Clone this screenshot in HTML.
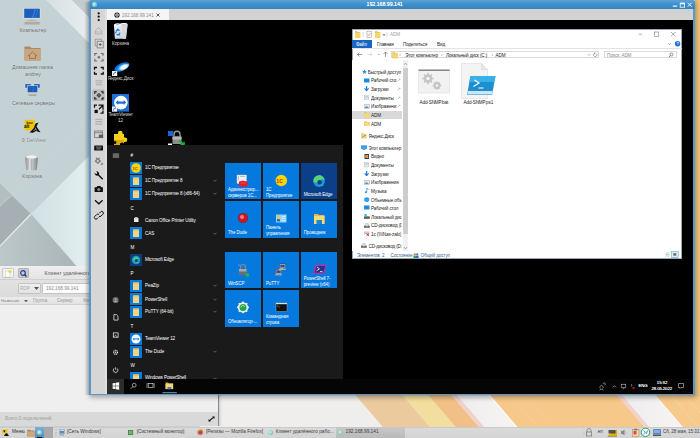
<!DOCTYPE html>
<html><head><meta charset="utf-8">
<style>
*{box-sizing:border-box;margin:0;padding:0}
html,body{width:700px;height:438px;overflow:hidden;position:relative;background:#c6d1d4;font-family:"Liberation Sans",sans-serif}
.a{position:absolute}
.t{position:absolute;white-space:nowrap;line-height:1}
</style></head><body>
<!-- wallpaper -->
<svg class="a" style="left:0;top:0" width="700" height="438" viewBox="0 0 700 438">
<defs>
<linearGradient id="wb" x1="0" y1="0" x2="1" y2="0"><stop offset="0" stop-color="#d6dfe2"/><stop offset="1" stop-color="#e9eff0"/></linearGradient>
<linearGradient id="wbt" x1="0" y1="0" x2="1" y2="0"><stop offset="0" stop-color="#bcc7ca"/><stop offset="1" stop-color="#a8b2b6"/></linearGradient>
<linearGradient id="wr" x1="0" y1="0" x2="1" y2="0"><stop offset="0" stop-color="#d0e0e3"/><stop offset="1" stop-color="#e4eff0"/></linearGradient>
</defs>
<rect width="700" height="438" fill="#c5d2d5"/>
<polygon points="46,0 72,0 92,20 92,46" fill="url(#wb)"/>
<polygon points="72,0 92,0 92,20" fill="#c2cbce"/>
<polygon points="31,214 92,153 92,284" fill="url(#wr)"/>
<polygon points="0,184 31,214 0,246" fill="#a6b0b4"/>
<polygon points="0,184 12,195 0,206" fill="#b4bec1"/>
<polygon points="0,246 31,214 92,284 0,284" fill="url(#wbt)"/>
<line x1="0" y1="246" x2="31" y2="214" stroke="#e8eeef" stroke-width="1.1"/>
<line x1="0" y1="206" x2="12" y2="195" stroke="#d5dde0" stroke-width="0.6"/>
<line x1="12" y1="195" x2="92" y2="114" stroke="#cdd7da" stroke-width="0.5"/>
<!-- bottom orange stripes -->
<defs><linearGradient id="ws" x1="0" x2="1"><stop offset="0" stop-color="#ededed"/><stop offset="1" stop-color="#f8f3f3"/></linearGradient></defs>
<rect x="200" y="390" width="500" height="40" fill="#efeeec"/>
<polygon points="353.7,393 400.9,393 430.1,427 382.9,427" fill="#ebcb9d"/>
<polygon points="400.9,393 426.6,393 455.8,427 430.1,427" fill="#f2de9f"/>
<polygon points="426.6,393 449.8,393 479.0,427 455.8,427" fill="#f1c086"/>
<polygon points="449.8,393 455.3,393 484.5,427 479.0,427" fill="#f0d2cc"/>
<polygon points="455.3,393 488.3,393 517.5,427 484.5,427" fill="url(#ws)"/>
<line x1="487.8" y1="393" x2="517.0" y2="427" stroke="#ffffff" stroke-width="1.2" opacity="1"/>
<polygon points="488.3,393 615.3,393 644.5,427 517.5,427" fill="#f6c889"/>
<line x1="508.3" y1="393" x2="537.5" y2="427" stroke="#f9d6a8" stroke-width="0.8" opacity="0.6"/>
<line x1="523.3" y1="393" x2="552.5" y2="427" stroke="#f9d6a8" stroke-width="0.8" opacity="0.5"/>
<polygon points="615.3,393 620.3,393 649.5,427 644.5,427" fill="#f3d2cc"/>
<polygon points="620.3,393 653.8,393 683.0,427 649.5,427" fill="url(#ws)"/>
<line x1="653.3" y1="393" x2="682.5" y2="427" stroke="#ffffff" stroke-width="1.0" opacity="1"/>
<polygon points="653.8,393 718.3,393 747.5,427 683.0,427" fill="#f7c98a"/>
<line x1="669.3" y1="393" x2="698.5" y2="427" stroke="#f9dab0" stroke-width="0.8" opacity="0.7"/>
<line x1="682.9" y1="393" x2="712.1" y2="427" stroke="#f9dab0" stroke-width="0.8" opacity="0.7"/>
<rect x="200" y="393" width="500" height="4" fill="url(#shd)"/>
<defs><linearGradient id="shd" x1="0" y1="0" x2="0" y2="1"><stop offset="0" stop-color="#000" stop-opacity=".12"/><stop offset="1" stop-color="#000" stop-opacity="0"/></linearGradient></defs>
<rect x="693" y="0" width="7" height="395" fill="#f2c87e"/>
</svg>

<!-- desktop icons -->
<style>
.dl{position:absolute;white-space:nowrap;line-height:1;font-size:5.2px;color:#5f6669;text-align:center;text-shadow:0 0 1px rgba(255,255,255,.9)}
</style>
<svg class="a" style="left:22px;top:7px" width="20" height="19" viewBox="0 0 20 19">
<rect x="1.4" y="0.9" width="17.2" height="10.8" fill="#e2ddd2"/>
<rect x="2.2" y="1.7" width="15.6" height="9.2" fill="#1a5fbe"/>
<path d="M10,10.9 L12.5,1.7 L14,1.7 L11.5,10.9z M13,10.9 L15.5,1.7 L16.2,1.7 L13.7,10.9z" fill="#3f86da" opacity="0.8"/>
<rect x="7.5" y="11.7" width="5" height="1.6" fill="#c9c9c5"/>
<rect x="5.5" y="13.1" width="9" height="0.9" fill="#b5b5b1"/>
<rect x="1.8" y="14.4" width="16.4" height="3.6" rx="0.5" fill="#c2c2bf"/>
<path d="M2.8,15.6 h14.4 M2.8,16.8 h14.4" stroke="#8f8f8b" stroke-width="0.5"/>
</svg>
<div class="dl" style="left:19px;top:27.7px;width:28px;font-size:5.2px">Компьютер</div>
<svg class="a" style="left:24px;top:45px" width="17" height="16" viewBox="0 0 17 16">
<path d="M0.5,1.5 h5.5 l1.5,1.5 h9 v12.5 h-16z" fill="#a88a66"/>
<rect x="0.5" y="4" width="16" height="11.5" rx="0.5" fill="#c9a67e"/>
<path d="M4,11 L8.5,7 L13,11 M5.5,10 v3.5 h6 v-3.5" stroke="#8f7050" stroke-width="0.8" fill="none"/>
</svg>
<div class="dl" style="left:12px;top:65.2px;width:41px">Домашняя папка</div>
<div class="dl" style="left:22px;top:72.2px;width:22px">andrey</div>
<svg class="a" style="left:24px;top:82px" width="17" height="16" viewBox="0 0 17 16">
<rect x="0.8" y="1.6" width="6.6" height="4.6" fill="#d8d4cc"/><rect x="1.3" y="2.1" width="5.6" height="3.6" fill="#1d5db5"/>
<rect x="9.6" y="1.6" width="6.6" height="4.6" fill="#d8d4cc"/><rect x="10.1" y="2.1" width="5.6" height="3.6" fill="#1d5db5"/>
<rect x="3" y="3.3" width="11" height="7.6" fill="#ddd9d0"/><rect x="3.6" y="3.9" width="9.8" height="6.4" fill="#1b60bd"/>
<path d="M8,10.3 l1.5,-6.4 h0.8 l-1.5,6.4z" fill="#3b82d6" opacity="0.6"/>
<rect x="7" y="10.9" width="3" height="1.5" fill="#d0d0cc"/>
<rect x="4.5" y="12.3" width="8" height="1.6" rx="0.5" fill="#a9a9a5"/>
</svg>
<div class="dl" style="left:12px;top:101.2px;width:42px">Сетевые серверы</div>
<svg class="a" style="left:23px;top:119px" width="19" height="15" viewBox="0 0 19 15">
<rect x="1.8" y="0.8" width="10.2" height="10.6" fill="#f4c400"/>
<text x="3.6" y="4.6" font-size="2.7" font-weight="bold" fill="#111" font-family="Liberation Sans">base</text>
<text x="1" y="9" font-size="4.6" font-weight="bold" fill="#111" font-family="Liberation Sans">alt</text>
<path d="M12.5,4.5 L15.5,3.5 L13.5,7.5 L17.5,13.5 L13,12 L10,13.8 L6.5,13.5 L10.5,9.5z" fill="#111"/>
<path d="M12,8.5 L13.5,11.5 M10.5,12 L12.5,10" stroke="#ddd" stroke-width="0.6"/>
</svg>
<div class="dl" style="left:21px;top:138.2px;width:25px;color:#7c8386">Ф DetView</div>
<svg class="a" style="left:24px;top:154px" width="15" height="17" viewBox="0 0 15 17">
<defs><linearGradient id="tg" x1="0" x2="1"><stop offset="0" stop-color="#8a8d8e"/><stop offset=".35" stop-color="#d8dadb"/><stop offset=".7" stop-color="#b1b4b5"/><stop offset="1" stop-color="#7d8081"/></linearGradient></defs>
<path d="M1,3 L14,3 L12.8,16 Q7.5,17.2 2.2,16z" fill="url(#tg)"/>
<ellipse cx="7.5" cy="3" rx="6.5" ry="1.8" fill="#c5c8c9"/>
<ellipse cx="7.5" cy="2.8" rx="5" ry="1.6" fill="#f1f2f2"/>
<path d="M4,4.5 v10 M7.5,5 v10.5 M11,4.5 v10" stroke="#9a9d9e" stroke-width="0.5"/>
</svg>
<div class="dl" style="left:21px;top:174.2px;width:22px">Корзина</div>

<!-- bottom-left window -->
<div class="a" style="left:0;top:266px;width:219px;height:160px;background:#efefef"></div>
<div class="a" style="left:0;top:266px;width:219px;height:13.5px;background:linear-gradient(#efefef,#e4e4e4);border-bottom:1px solid #cfcfcf"></div>
<div class="a" style="left:2.4px;top:268px;width:11.3px;height:10.4px;background:#f3f3f3;border:0.6px solid #c9c9c9;border-radius:1.2px"></div>
<svg class="a" style="left:4px;top:269px" width="9" height="9" viewBox="0 0 9 9"><rect x="1.5" y="2" width="4.5" height="6" fill="#fff" stroke="#bbb" stroke-width="0.4"/><circle cx="6" cy="2.5" r="1.6" fill="#f5d33a"/></svg>
<div class="a" style="left:18px;top:268px;width:10.7px;height:10.4px;background:#c8c8c8;border:0.6px solid #b3b3b3;border-radius:1.2px"></div>
<svg class="a" style="left:19px;top:269px" width="9" height="9" viewBox="0 0 9 9"><circle cx="4" cy="4" r="2.3" fill="none" stroke="#1f44a6" stroke-width="1.2"/><line x1="5.7" y1="5.7" x2="7.5" y2="7.5" stroke="#222" stroke-width="1.1"/></svg>
<div class="t" style="left:44.5px;top:270.7px;font-size:5.2px;color:#5a5a5a">Клиент удалённого доступа</div>
<div class="a" style="left:0;top:280px;width:219px;height:17px;background:linear-gradient(#e2e2e2,#dadada)"></div>
<div class="a" style="left:18px;top:283.4px;width:23px;height:11px;background:linear-gradient(#efefef,#e3e3e3);border:0.6px solid #c3c3c3;border-radius:1.2px"></div>
<div class="t" style="left:20px;top:286.5px;font-size:4.6px;color:#a8a8a8">RDP</div>
<svg class="a" style="left:34px;top:287px" width="5" height="3" viewBox="0 0 5 3"><polygon points="0,0 5,0 2.5,3" fill="#555"/></svg>
<div class="a" style="left:42.2px;top:283.4px;width:60px;height:11px;background:#fbfbfb;border:0.6px solid #c3c3c3;border-radius:1.2px"></div>
<div class="t" style="left:46px;top:286.5px;font-size:4.7px;color:#8a8a8a">192.168.99.141</div>
<div class="a" style="left:0;top:297px;width:219px;height:7.5px;background:linear-gradient(#ececec,#e2e2e2);border-bottom:0.5px solid #d2d2d2"></div>
<div class="t" style="left:1px;top:298.6px;font-size:4.3px;letter-spacing:-0.1px;color:#8a8a8a">Название</div>
<svg class="a" style="left:24px;top:299.8px" width="4" height="2.5" viewBox="0 0 4 2.5"><polygon points="0,0 4,0 2,2.5" fill="#666"/></svg>
<div class="t" style="left:33px;top:298.6px;font-size:4.5px;color:#9a9a9a">Группа</div>
<div class="t" style="left:57px;top:298.6px;font-size:4.5px;color:#9a9a9a">Сервер</div>
<div class="t" style="left:83px;top:298.6px;font-size:4.5px;color:#9a9a9a">Метка</div>
<div class="a" style="left:0;top:412px;width:219px;height:14px;background:#d9d9d9"></div>
<div class="t" style="left:5px;top:417.4px;font-size:4.7px;color:#9e9e9e">Всего 0 подключений.</div>
<svg class="a" style="left:208px;top:416px" width="7" height="6" viewBox="0 0 7 6"><path d="M1,5 L6,1" stroke="#222" stroke-width="1.3"/><path d="M0.5,5.5 l0,-2.4 l2.4,2.4z M6.5,0.5 l0,2.4 l-2.4,-2.4z" fill="#222"/></svg>
<div class="a" style="left:218.3px;top:394px;width:1px;height:32px;background:#8a8a8a"></div>
<div class="a" style="left:219.3px;top:394px;width:3px;height:32px;background:linear-gradient(90deg,rgba(0,0,0,.12),rgba(0,0,0,0))"></div>

<!-- remote window -->
<div class="a" style="left:84px;top:2px;width:5.2px;height:393px;background:linear-gradient(90deg,rgba(0,0,0,0),rgba(0,0,0,.2))"></div>
<div class="a" style="left:89.6px;top:0;width:605.4px;height:395px;box-shadow:0 1px 5px 1.5px rgba(0,0,0,.32)"></div>
<div class="a" style="left:89.2px;top:0;width:605.8px;height:395px;background:#5b97c9;border-radius:2.5px 2.5px 0 0"></div>
<div class="a" style="left:89.6px;top:0;width:605.4px;height:9px;background:linear-gradient(#5ba3d8,#3e8fcc 50%,#3584c0);border-radius:2.5px 2.5px 0 0"></div>
<div class="a" style="left:92px;top:1.8px;width:5.4px;height:5.4px;border-radius:50%;background:radial-gradient(circle at 40% 40%,#c9f0e6,#6cc6b8 70%,#8fd0e6)"></div>
<div class="t" style="left:366.6px;top:2.3px;font-size:5.2px;color:#fff;text-shadow:0 0 0.5px #fff">192.168.99.141</div>
<svg class="a" style="left:671px;top:1px" width="22" height="8" viewBox="0 0 22 8">
<rect x="1.8" y="4.6" width="4.4" height="1.1" fill="#fff"/>
<rect x="9.2" y="2" width="4.4" height="4.2" fill="none" stroke="#fff" stroke-width="0.8"/><rect x="9.2" y="2" width="4.4" height="1.3" fill="#fff"/>
<path d="M16.7,1.8 L20.6,5.8 M20.6,1.8 L16.7,5.8" stroke="#fff" stroke-width="0.9"/>
</svg>
<div class="a" style="left:91px;top:9px;width:602px;height:384.5px;background:#d6d6d6"></div>
<div class="a" style="left:105.4px;top:9px;width:1.4px;height:384.5px;background:#e0e0e0"></div>
<div class="a" style="left:107px;top:9px;width:586px;height:11px;background:#d2d2d2"></div>
<div class="a" style="left:107px;top:9.1px;width:62px;height:10.9px;background:#f5f5f5"></div>
<svg class="a" style="left:114px;top:11.5px" width="6" height="6" viewBox="0 0 6 6"><circle cx="3" cy="3" r="2.6" fill="#111"/><path d="M3,0.9 L5.1,3 L3,5.1 L0.9,3z" fill="#eee"/><circle cx="3" cy="3" r="0.8" fill="#111"/></svg>
<div class="t" style="left:121.8px;top:14.2px;font-size:4.6px;color:#8c8c8c">192.168.99.141</div>
<svg class="a" style="left:155.8px;top:12.8px" width="4" height="4" viewBox="0 0 4 4"><path d="M0.5,0.5 L3.5,3.5 M3.5,0.5 L0.5,3.5" stroke="#444" stroke-width="0.9"/></svg>
<div class="a" style="left:107px;top:20px;width:586px;height:373.5px;background:#000"></div>
<!-- toolbar icons -->
<svg class="a" style="left:91px;top:9px" width="16" height="220" viewBox="91 9 16 220">
<circle cx="98.7" cy="13.3" r="1.15" fill="#111"/><circle cx="98.7" cy="16.7" r="1.15" fill="#111"/><circle cx="98.7" cy="20.1" r="1.15" fill="#111"/>
<path d="M95.2,31 L98.6,27.6 L102,31 V34 H95.2z" fill="#d6d6d6" stroke="#aaaaaa" stroke-width="0.8"/><path d="M95.2,32 h6.8" stroke="#aaa" stroke-width="0.6"/>
<rect x="95.2" y="39.2" width="6.2" height="6.6" fill="none" stroke="#9a9a9a" stroke-width="0.9"/>
<rect x="97.2" y="41.3" width="6" height="6.6" fill="#dcdcdc" stroke="#858585" stroke-width="0.9"/>
<path d="M100.2,43 v3.2 M98.6,44.6 h3.2" stroke="#555" stroke-width="0.8"/>
<path d="M94.8,55.8 v-2.3 h2.3 M100.7,53.5 h2.3 v2.3 M103,58.7 v2.3 h-2.3 M97.1,61 h-2.3 v-2.3" fill="none" stroke="#6e6e6e" stroke-width="1.2"/>
<circle cx="98.9" cy="57.3" r="1.3" fill="#6e6e6e"/>
<path d="M94.5,69.8 v-2.3 h2.5 M100.7,67.5 h2.5 v2.3 M103.2,71.7 v2.3 h-2.5 M97,74 h-2.5 v-2.3" fill="none" stroke="#111" stroke-width="1.3"/>
<path d="M95.5,80.8 h6.6 M95.5,82.8 h6.6 M95.5,84.8 h6.6" stroke="#a8a8a8" stroke-width="0.9"/>
<rect x="92.6" y="89.9" width="11.7" height="10.6" rx="1" fill="#bfbfbf" stroke="#a6a6a6" stroke-width="0.6"/>
<path d="M94.8,93.7 v-2 h2 M101,91.7 h2 v2 M103,97 v2 h-2 M96.8,99 h-2 v-2" fill="none" stroke="#111" stroke-width="1.1"/>
<circle cx="98.9" cy="95.3" r="1.5" fill="none" stroke="#222" stroke-width="0.8"/><path d="M98.9,93 v4.6 M96.6,95.3 h4.6" stroke="#222" stroke-width="0.5"/>
<path d="M94.5,107.7 v-2.5 h2.5 M103,109.7 v-4.5 h-4.5 M99,109.2 L103,105.2" fill="none" stroke="#111" stroke-width="1.25"/>
<rect x="94.5" y="109.8" width="3.3" height="3.3" fill="#111"/><path d="M100.5,113 h2.5 v-2.5" fill="none" stroke="#111" stroke-width="1.25"/>
<path d="M95.3,119.3 h7 M95.3,121.7 h7 M95.3,124.1 h7" stroke="#a0a0a0" stroke-width="0.9"/>
<rect x="94.6" y="131" width="7.8" height="6.6" fill="none" stroke="#7e7e7e" stroke-width="0.9"/><path d="M94.6,132.7 h7.8" stroke="#7e7e7e" stroke-width="0.9"/><rect x="98.8" y="134.6" width="4.4" height="3.4" fill="#5e5e5e"/>
<rect x="94.2" y="145.4" width="8.8" height="5.2" rx="0.6" fill="#111"/><path d="M95.8,147.1 h5.6 M96.5,148.9 h4.2" stroke="#ddd" stroke-width="0.6"/>
<g fill="#858585"><circle cx="97.8" cy="161" r="2.3"/><path d="M97.1,158 h1.4 v6 h-1.4z M94.8,160.3 h6 v1.4 h-6z" /><path d="M95.5,158.2 l1,-1 l4.3,4.3 l-1,1z M99.1,157.2 l1,1 l-4.3,4.3 l-1,-1z"/></g><circle cx="97.8" cy="161" r="0.9" fill="#dcdcdc"/><circle cx="101.9" cy="164" r="1.3" fill="#8e8e8e"/><circle cx="101.9" cy="164" r="0.45" fill="#dcdcdc"/>
<path d="M94.6,172.6 a2.6,2.6 0 0 0 3.4,3.0 L102.2,179.8 L103.2,178.8 L99,174.6 a2.6,2.6 0 0 0 -3,-3.4 l1.3,1.3 l-0.3,1.2 l-1.2,0.3z" fill="#111"/>
<path d="M94.6,187.2 h2 l0.8,-1.2 h3 l0.8,1.2 h1.7 v4.8 h-8.3z" fill="#111"/><circle cx="98.8" cy="189.4" r="1.5" fill="#8c8c8c"/>
<path d="M95,200.2 L98.8,203.8 L102.6,200.2" fill="none" stroke="#111" stroke-width="1.3"/>
<path d="M99.3,213.2 l1.3,-1.3 a1.6,1.6 0 0 1 2.3,2.3 l-1.9,1.9 a1.6,1.6 0 0 1 -2.1,0.1 M98.4,217.4 l-1.3,1.3 a1.6,1.6 0 0 1 -2.3,-2.3 l1.9,-1.9 a1.6,1.6 0 0 1 2.1,-0.1" fill="none" stroke="#111" stroke-width="1.0"/>
</svg>

<!-- remote desktop icons -->
<style>.rl{position:absolute;white-space:nowrap;line-height:1;font-size:4.6px;letter-spacing:-0.1px;color:#d8d8d8;text-align:center}</style>
<svg class="a" style="left:113px;top:23px" width="16" height="17" viewBox="0 0 16 17">
<defs><linearGradient id="rb" x1="0" x2="1" y1="0" y2="1"><stop offset="0" stop-color="#f7f8fa"/><stop offset="1" stop-color="#c4c9cf"/></linearGradient></defs>
<path d="M0.9,1.8 L14.6,1.2 L12.9,15.8 L1.9,15.8z" fill="url(#rb)"/>
<path d="M8.5,1.5 L14.6,1.2 L12.9,15.8 L9.5,15.8z" fill="#d5d9de"/>
<path d="M1.2,2 q3,-1.8 6,-0.6 q3,-1.5 7,-0.4" stroke="#fff" stroke-width="1.2" fill="none"/>
<path d="M3.2,8.2 l1.6,-2 l1.7,1.6 M6.8,9.6 l-0.6,2.2 l-2.6,0 M2.6,10.3 l0.5,-1.7" fill="none" stroke="#1d7fe0" stroke-width="1.4"/>
</svg>
<div class="rl" style="left:111px;top:41.5px;width:19px">Корзина</div>
<svg class="a" style="left:111px;top:60px" width="19" height="17" viewBox="0 0 19 17">
<defs><radialGradient id="yd" cx="0.62" cy="0.62" r="0.6"><stop offset="0" stop-color="#fff"/><stop offset="0.35" stop-color="#e8f6ff"/><stop offset="0.6" stop-color="#2aa8f8"/><stop offset="1" stop-color="#0b5fd8"/></radialGradient></defs>
<ellipse cx="10.8" cy="7" rx="8" ry="3.9" transform="rotate(-24 10.8 7)" fill="url(#yd)"/>
<path d="M4,8.5 q4,-6 13,-5" stroke="#0a3a9a" stroke-width="0.6" fill="none" opacity="0.6"/>
<rect x="1" y="11" width="5.2" height="5" fill="#f4f4f4"/><path d="M2.3,15 q0,-2.6 2.6,-2.6 l-0.9,-0.7" fill="none" stroke="#2662b8" stroke-width="0.8"/>
</svg>
<div class="rl" style="left:107px;top:77.4px;width:27px">Яндекс.Диск</div>
<svg class="a" style="left:111.8px;top:94px" width="17.4" height="17.6" viewBox="0 0 17.4 17.6">
<rect width="17.4" height="17.6" fill="#1f6fd6"/>
<circle cx="8.9" cy="8.6" r="6.8" fill="#fff"/>
<path d="M3.6,8.6 L6.2,6.1 V7.5 H11.6 V6.1 L14.2,8.6 L11.6,11.1 V9.7 H6.2 V11.1z" fill="#1f6fd6"/>
<rect x="0" y="12.6" width="5" height="5" fill="#f4f4f4"/><path d="M1.2,16.6 q0,-2.6 2.6,-2.6 l-0.9,-0.7" fill="none" stroke="#2662b8" stroke-width="0.8"/>
</svg>
<div class="rl" style="left:108px;top:112.9px;width:25px">TeamViewer</div>
<div class="rl" style="left:115px;top:119px;width:11px">12</div>
<svg class="a" style="left:112.5px;top:129.5px" width="16" height="16" viewBox="0 0 16 16">
<path d="M1,4 H5 V3 a2.3,2.3 0 1 1 4.6,0 V4 H11 V7.5 H12 a2.3,2.3 0 1 1 0,4.6 H11 V15.8 H1z" fill="#f3cf1c"/>
<path d="M1,10 H11 V15.8 H1z" fill="#d9ab0e"/>
<path d="M7.5,15.8 a2,2 0 1 1 3.5,-1.8 V15.8z" fill="#000"/>
<path d="M1.2,11 a1.6,1.6 0 1 1 0,3z" fill="#000"/>
</svg>
<svg class="a" style="left:166.5px;top:129.5px" width="18" height="16" viewBox="0 0 18 16">
<rect x="1" y="1" width="5" height="5" fill="#1c63d6"/>
<path d="M7,6.5 v-2.2 a3,3 0 0 1 6,0 v2.2" fill="none" stroke="#9a9a9a" stroke-width="1.4"/>
<rect x="5.5" y="6.5" width="9" height="7.5" rx="0.6" fill="#8d8d8d"/>
<rect x="5.5" y="6.5" width="9" height="3" fill="#b8b8b8"/>
<path d="M12,10 l5,5 h-4 l3,-3" fill="#17b33a"/>
<path d="M12.2,10.5 L17,15.2 M13.5,15.2 H17 V11.8" stroke="#18b53c" stroke-width="1.5" fill="none"/>
<rect x="1" y="13.5" width="4" height="2" fill="#fff"/>
</svg>

<!-- explorer -->
<style>.et{position:absolute;white-space:nowrap;line-height:1;font-size:4.6px;letter-spacing:-0.12px;color:#222}</style>
<div class="a" style="left:351.8px;top:28.7px;width:330.7px;height:230.3px;background:#fff;border:0.5px solid #9aa6b5"></div>
<!-- title row -->
<svg class="a" style="left:354px;top:30px" width="50" height="9" viewBox="0 0 50 9">
<path d="M1,1.2 h2.2 l0.7,0.8 h2.3 v6 h-5.2z" fill="#e0b43c"/><rect x="1" y="2.4" width="5.2" height="5.6" fill="#f6d66b"/>
<path d="M9,2 v5" stroke="#bbb" stroke-width="0.5"/>
<rect x="13" y="1.2" width="4.3" height="6" fill="#fff" stroke="#8a8a8a" stroke-width="0.5"/><path d="M14,4.5 l1,1 l1.5,-2" stroke="#e04b2a" stroke-width="0.6" fill="none"/>
<path d="M21,1.2 h2.2 l0.7,0.8 h2.3 v6 h-5.2z" fill="#e0b43c"/><rect x="21" y="2.4" width="5.2" height="5.6" fill="#f6d66b"/>
<path d="M29,4 l1,1.5 l1,-1.5" stroke="#444" stroke-width="0.7" fill="none"/>
<path d="M33,2 v5" stroke="#bbb" stroke-width="0.5"/>
</svg>
<div class="et" style="left:390px;top:33.0px;color:#a0a0a0">ADM</div>
<svg class="a" style="left:636px;top:30px" width="42" height="8" viewBox="0 0 42 8">
<path d="M2.7,4.2 h3.4" stroke="#666" stroke-width="0.5"/>
<rect x="18.3" y="2" width="4.5" height="4.3" fill="none" stroke="#666" stroke-width="0.5"/>
<path d="M35,2 l4.4,4.4 M39.4,2 l-4.4,4.4" stroke="#666" stroke-width="0.55"/>
</svg>
<!-- ribbon tabs -->
<div class="a" style="left:352px;top:40px;width:20px;height:7.8px;background:#1a65c2"></div>
<div class="et" style="left:356px;top:43.0px;color:#fff">Файл</div>
<div class="et" style="left:377px;top:43.0px">Главная</div>
<div class="et" style="left:403px;top:43.0px">Поделиться</div>
<div class="et" style="left:437px;top:43.0px">Вид</div>
<svg class="a" style="left:666px;top:40px" width="16" height="8" viewBox="0 0 16 8"><path d="M2,3 l1.5,1.5 l1.5,-1.5" stroke="#777" stroke-width="0.5" fill="none"/><circle cx="11.6" cy="3.7" r="2.7" fill="#1a6fd0"/><text x="10.5" y="5.3" font-size="4" fill="#fff" font-family="Liberation Sans" font-weight="bold">?</text></svg>
<div class="a" style="left:352px;top:48px;width:330px;height:0.5px;background:#e3e3e3"></div>
<!-- nav row -->
<svg class="a" style="left:354px;top:50px" width="40" height="9" viewBox="0 0 40 9">
<path d="M3.5,4.5 h4.5 M5.5,2.6 L3.5,4.5 L5.5,6.4" stroke="#555" stroke-width="0.6" fill="none"/>
<path d="M13.5,4.5 h4.5 M16,2.6 L18,4.5 L16,6.4" stroke="#c4c4c4" stroke-width="0.6" fill="none"/>
<path d="M24,4 l0.9,0.9 l0.9,-0.9" stroke="#666" stroke-width="0.5" fill="none"/>
<path d="M31.5,7 v-5 M29.5,4 L31.5,2 L33.5,4" stroke="#555" stroke-width="0.6" fill="none"/>
</svg>
<div class="a" style="left:390.9px;top:51.2px;width:208.5px;height:7.3px;border:0.5px solid #d9d9d9;background:#fff"></div>
<svg class="a" style="left:391px;top:51px" width="210" height="8" viewBox="0 0 210 8">
<path d="M1.5,1.3 h2 l0.6,0.7 h2.5 v5.2 h-5.1z" fill="#e0b43c"/><rect x="1.5" y="2.3" width="5.1" height="4.9" fill="#f6d66b"/>
<path d="M8.6,3 l1,1 l-1,1" stroke="#777" stroke-width="0.45" fill="none"/>
<path d="M50.4,3 l1,1 l-1,1" stroke="#777" stroke-width="0.45" fill="none"/>
<path d="M100.8,3 l1,1 l-1,1" stroke="#777" stroke-width="0.45" fill="none"/>
<path d="M197,3.3 l1,1 l1,-1" stroke="#555" stroke-width="0.5" fill="none"/>
<path d="M201,1 v6.2" stroke="#e0e0e0" stroke-width="0.4"/>
<path d="M205.4,2.6 a1.7,1.7 0 1 1 -1.6,-0.4 M203.9,1.3 l0.1,1 l-1,0.3" stroke="#555" stroke-width="0.5" fill="none"/>
</svg>
<div class="et" style="left:405.3px;top:53.8px">Этот компьютер</div>
<div class="et" style="left:445.9px;top:53.8px">Локальный диск (C:)</div>
<div class="et" style="left:495.6px;top:53.8px">ADM</div>
<div class="a" style="left:603.8px;top:51.2px;width:73.5px;height:7.3px;border:0.5px solid #d9d9d9;background:#fff"></div>
<div class="et" style="left:607px;top:53.8px;color:#8a8a8a">Поиск: ADM</div>
<svg class="a" style="left:668px;top:52px" width="6" height="6" viewBox="0 0 6 6"><circle cx="3.5" cy="2.5" r="1.5" fill="none" stroke="#444" stroke-width="0.55"/><path d="M2.4,3.6 L1,5" stroke="#444" stroke-width="0.65"/></svg>

<!-- explorer body -->
<div class="a" style="left:352px;top:60px;width:56px;height:191px;background:#fff"></div>
<div class="a" style="left:352.4px;top:110.7px;width:49.6px;height:8.8px;background:#d9d9d9"></div>
<svg class="a" style="left:361.6px;top:69.0px" width="6" height="5.4" viewBox="0 0 6 5.4"><path d="M2.5,0.3 l0.7,1.6 l1.7,0.2 l-1.3,1.1 l0.4,1.7 l-1.5,-0.9 l-1.5,0.9 l0.4,-1.7 l-1.3,-1.1 l1.7,-0.2z" fill="#2b8de0"/></svg>
<div class="et" style="left:367.8px;top:70.7px;width:33.7px;clip-path:inset(-3px 0 -3px 0)">Быстрый доступ</div>
<svg class="a" style="left:363.8px;top:77.6px" width="6" height="5.4" viewBox="0 0 6 5.4"><rect x="0" y="0.5" width="5.5" height="4" fill="#1e8be6"/></svg>
<div class="et" style="left:371px;top:79.3px;width:25.5px;clip-path:inset(-3px 0 -3px 0)">Рабочий стол</div>
<svg class="a" style="left:397px;top:78.2px" width="4" height="4" viewBox="0 0 4 4"><path d="M0.8,3.2 L3,1 M2,0.5 L3.5,2" stroke="#888" stroke-width="0.5"/></svg>
<svg class="a" style="left:363.8px;top:86.4px" width="6" height="5.4" viewBox="0 0 6 5.4"><path d="M2.6,0 v3.8 M0.6,2.4 L2.6,4.6 L4.6,2.4" stroke="#1e7ed8" stroke-width="1.2" fill="none"/></svg>
<div class="et" style="left:371px;top:88.1px;width:30.5px;clip-path:inset(-3px 0 -3px 0)">Загрузки</div>
<svg class="a" style="left:397px;top:87.0px" width="4" height="4" viewBox="0 0 4 4"><path d="M0.8,3.2 L3,1 M2,0.5 L3.5,2" stroke="#888" stroke-width="0.5"/></svg>
<svg class="a" style="left:363.8px;top:95.0px" width="6" height="5.4" viewBox="0 0 6 5.4"><rect x="0.5" y="0" width="4" height="5" fill="#e8edf2" stroke="#9aa6b2" stroke-width="0.4"/><path d="M1.3,1.5 h2.5 M1.3,2.6 h2.5" stroke="#7aa7d8" stroke-width="0.4"/></svg>
<div class="et" style="left:371px;top:96.7px;width:30.5px;clip-path:inset(-3px 0 -3px 0)">Документы</div>
<svg class="a" style="left:397px;top:95.6px" width="4" height="4" viewBox="0 0 4 4"><path d="M0.8,3.2 L3,1 M2,0.5 L3.5,2" stroke="#888" stroke-width="0.5"/></svg>
<svg class="a" style="left:363.8px;top:103.6px" width="6" height="5.4" viewBox="0 0 6 5.4"><rect x="0" y="0.5" width="5.5" height="4" fill="#dfe6ea" stroke="#8c9aa6" stroke-width="0.4"/><path d="M0.5,4 l2,-2 l2.5,2z" fill="#5d8fb8"/></svg>
<div class="et" style="left:371px;top:105.3px;width:25.5px;clip-path:inset(-3px 0 -3px 0)">Изображения</div>
<svg class="a" style="left:397px;top:104.2px" width="4" height="4" viewBox="0 0 4 4"><path d="M0.8,3.2 L3,1 M2,0.5 L3.5,2" stroke="#888" stroke-width="0.5"/></svg>
<svg class="a" style="left:363.8px;top:112.2px" width="6" height="5.4" viewBox="0 0 6 5.4"><path d="M0.3,0.3 h2 l0.6,0.6 h2.6 v4.3 h-5.2z" fill="#e2b84a"/><rect x="0.3" y="1.2" width="5.2" height="4" fill="#f7d97a"/></svg>
<div class="et" style="left:371px;top:113.9px;width:30.5px;clip-path:inset(-3px 0 -3px 0)">ADM</div>
<svg class="a" style="left:363.8px;top:120.8px" width="6" height="5.4" viewBox="0 0 6 5.4"><path d="M0.3,0.3 h2 l0.6,0.6 h2.6 v4.3 h-5.2z" fill="#e2b84a"/><rect x="0.3" y="1.2" width="5.2" height="4" fill="#f7d97a"/></svg>
<div class="et" style="left:371px;top:122.5px;width:30.5px;clip-path:inset(-3px 0 -3px 0)">ADM</div>
<svg class="a" style="left:360.6px;top:133.3px" width="6" height="5.4" viewBox="0 0 6 5.4"><path d="M0.3,0.3 h2 l0.6,0.6 h2.6 v4.3 h-5.2z" fill="#e2b84a"/><rect x="0.3" y="1.2" width="5.2" height="4" fill="#f7d97a"/><path d="M1.5,4.5 q1,-2 3,-2" stroke="#2a6fd0" stroke-width="0.8" fill="none"/></svg>
<div class="et" style="left:368.5px;top:135.0px;width:33.5px;clip-path:inset(-3px 0 -3px 0)">Яндекс.Диск</div>
<svg class="a" style="left:360.6px;top:144.8px" width="6" height="5.4" viewBox="0 0 6 5.4"><rect x="0" y="0.3" width="6" height="3.8" fill="#36a4ec"/><rect x="1.5" y="4.3" width="3" height="0.7" fill="#777"/></svg>
<div class="et" style="left:368.5px;top:146.5px;width:33.5px;clip-path:inset(-3px 0 -3px 0)">Этот компьютер</div>
<svg class="a" style="left:363.8px;top:153.6px" width="6" height="5.4" viewBox="0 0 6 5.4"><rect x="0.5" y="0" width="4.5" height="5" fill="#2d3b52"/><rect x="1.3" y="1" width="2.9" height="3" fill="#e0a040"/></svg>
<div class="et" style="left:371px;top:155.3px;width:30.5px;clip-path:inset(-3px 0 -3px 0)">Видео</div>
<svg class="a" style="left:363.8px;top:162.4px" width="6" height="5.4" viewBox="0 0 6 5.4"><rect x="0.5" y="0" width="4" height="5" fill="#e8edf2" stroke="#9aa6b2" stroke-width="0.4"/><path d="M1.3,1.5 h2.5 M1.3,2.6 h2.5" stroke="#7aa7d8" stroke-width="0.4"/></svg>
<div class="et" style="left:371px;top:164.1px;width:30.5px;clip-path:inset(-3px 0 -3px 0)">Документы</div>
<svg class="a" style="left:363.8px;top:171.1px" width="6" height="5.4" viewBox="0 0 6 5.4"><path d="M2.6,0 v3.8 M0.6,2.4 L2.6,4.6 L4.6,2.4" stroke="#1e7ed8" stroke-width="1.2" fill="none"/></svg>
<div class="et" style="left:371px;top:172.8px;width:30.5px;clip-path:inset(-3px 0 -3px 0)">Загрузки</div>
<svg class="a" style="left:363.8px;top:179.6px" width="6" height="5.4" viewBox="0 0 6 5.4"><rect x="0" y="0.5" width="5.5" height="4" fill="#dfe6ea" stroke="#8c9aa6" stroke-width="0.4"/><path d="M0.5,4 l2,-2 l2.5,2z" fill="#5d8fb8"/></svg>
<div class="et" style="left:371px;top:181.3px;width:30.5px;clip-path:inset(-3px 0 -3px 0)">Изображения</div>
<svg class="a" style="left:363.8px;top:188.2px" width="6" height="5.4" viewBox="0 0 6 5.4"><path d="M2.8,0.2 v3.8 M2.8,0.2 l1.8,1" stroke="#1e8be6" stroke-width="0.7" fill="none"/><circle cx="1.9" cy="4.2" r="1" fill="#1e8be6"/></svg>
<div class="et" style="left:371px;top:189.9px;width:30.5px;clip-path:inset(-3px 0 -3px 0)">Музыка</div>
<svg class="a" style="left:363.8px;top:196.8px" width="6" height="5.4" viewBox="0 0 6 5.4"><path d="M2.7,0 l2.5,1.3 v2.8 l-2.5,1.3 l-2.5,-1.3 v-2.8z" fill="#2ba4e8"/></svg>
<div class="et" style="left:371px;top:198.5px;width:30.5px;clip-path:inset(-3px 0 -3px 0)">Объемные объекты</div>
<svg class="a" style="left:363.8px;top:205.4px" width="6" height="5.4" viewBox="0 0 6 5.4"><rect x="0" y="0.5" width="5.5" height="4" fill="#1e8be6"/></svg>
<div class="et" style="left:371px;top:207.1px;width:30.5px;clip-path:inset(-3px 0 -3px 0)">Рабочий стол</div>
<svg class="a" style="left:363.8px;top:214.0px" width="6" height="5.4" viewBox="0 0 6 5.4"><rect x="0" y="2.4" width="5.8" height="2.4" fill="#555"/><rect x="0.5" y="0" width="2.2" height="2.4" fill="#35b0e8"/></svg>
<div class="et" style="left:371px;top:215.7px;width:30.5px;clip-path:inset(-3px 0 -3px 0)">Локальный диск (C:)</div>
<svg class="a" style="left:363.8px;top:222.6px" width="6" height="5.4" viewBox="0 0 6 5.4"><rect x="0" y="2.6" width="5.8" height="2.2" fill="#666"/><circle cx="2.9" cy="1.8" r="1.7" fill="#ddd" stroke="#888" stroke-width="0.3"/></svg>
<div class="et" style="left:371px;top:224.3px;width:30.5px;clip-path:inset(-3px 0 -3px 0)">CD-дисковод (D:)</div>
<svg class="a" style="left:363.8px;top:231.2px" width="6" height="5.4" viewBox="0 0 6 5.4"><rect x="0" y="0.5" width="5.5" height="3" fill="#ccc"/><path d="M2.5,2.6 l2.5,2.2 M5,2.6 l-2.5,2.2" stroke="#e01010" stroke-width="0.9"/></svg>
<div class="et" style="left:371px;top:232.9px;width:30.5px;clip-path:inset(-3px 0 -3px 0)">1c (\\\\Nas-zalo) (Z:)</div>
<svg class="a" style="left:360.6px;top:243.4px" width="6" height="5.4" viewBox="0 0 6 5.4"><rect x="0" y="2.6" width="5.8" height="2.2" fill="#666"/><circle cx="2.9" cy="1.8" r="1.7" fill="#ddd" stroke="#888" stroke-width="0.3"/></svg>
<div class="et" style="left:368.5px;top:245.1px;width:33.5px;clip-path:inset(-3px 0 -3px 0)">CD-дисковод (D:)</div>
<div class="a" style="left:402.7px;top:60px;width:5.5px;height:191px;background:#f0f0f0"></div>
<div class="a" style="left:403.2px;top:68px;width:4.6px;height:166px;background:#cdcdcd"></div>
<svg class="a" style="left:403px;top:62px" width="5" height="4" viewBox="0 0 5 4"><path d="M1,2.8 l1.5,-1.5 l1.5,1.5" stroke="#555" stroke-width="0.55" fill="none"/></svg>
<svg class="a" style="left:403px;top:246px" width="5" height="4" viewBox="0 0 5 4"><path d="M1,1.2 l1.5,1.5 l1.5,-1.5" stroke="#555" stroke-width="0.55" fill="none"/></svg>
<svg class="a" style="left:418px;top:69px" width="33" height="25" viewBox="0 0 33 25">
<rect x="0.6" y="0.6" width="31" height="23.4" fill="#f2f2f2" stroke="#d6d6d6" stroke-width="0.5"/>
<rect x="0.6" y="0.6" width="31" height="1.3" fill="#7d7d7d"/>
<g fill="#c3c5c7"><circle cx="10" cy="9.5" r="4.3"/><circle cx="19" cy="16.5" r="3.4"/></g>
<g stroke="#c3c5c7" stroke-width="1.6"><path d="M10,3.8 v11.4 M4.3,9.5 h11.4 M6,5.5 l8,8 M14,5.5 l-8,8"/><path d="M19,12.2 v8.6 M14.7,16.5 h8.6 M16,13.5 l6,6 M22,13.5 l-6,6"/></g>
<g fill="#f2f2f2"><circle cx="10" cy="9.5" r="1.7"/><circle cx="19" cy="16.5" r="1.3"/></g>
</svg>
<div class="et" style="left:419.5px;top:100.9px">Add-SNMP.bat</div>
<svg class="a" style="left:460px;top:63px" width="37" height="37" viewBox="0 0 37 37">
<path d="M1.5,0.6 h20 l6,6 v29 h-26z" fill="#f4f4f4" stroke="#d2d2d2" stroke-width="0.5"/>
<path d="M21.5,0.6 v6 h6" fill="#e6e6e6" stroke="#d2d2d2" stroke-width="0.5"/>
<path d="M10.5,13 h25 l-3.5,19 h-25z" fill="#1d8fd0"/>
<path d="M10.5,13 h25 l-1.2,6 h-25z" fill="#38b2e6"/>
<path d="M8,28 h24.5 l-0.7,3.5 h-24.5z" fill="#cfe6f2"/>
<path d="M14.5,17 l4.5,3 l-5.5,3.5 M18.5,25 h5" stroke="#fff" stroke-width="1.2" fill="none"/>
</svg>
<div class="et" style="left:463.5px;top:100.9px">Add-SNMP.ps1</div>
<div class="et" style="left:357px;top:253.7px;color:#3a5f8f">Элементов: 2</div>
<div class="et" style="left:390.6px;top:253.7px;color:#3a5f8f">Состояние:</div>
<svg class="a" style="left:413px;top:252.5px" width="6" height="5" viewBox="0 0 6 5"><circle cx="1.8" cy="1.3" r="1.1" fill="#c08040"/><circle cx="4.2" cy="1.3" r="1.1" fill="#4070c0"/><rect x="0.5" y="2.6" width="2.6" height="2.4" fill="#2f9f5f"/><rect x="3" y="2.6" width="2.6" height="2.4" fill="#3a6fb8"/></svg>
<div class="et" style="left:420.5px;top:253.7px;color:#3a5f8f">Общий доступ</div>
<svg class="a" style="left:664px;top:251px" width="15" height="7" viewBox="0 0 15 7"><path d="M1.5,2 h4 M1.5,3.5 h4 M1.5,5 h4" stroke="#aaa" stroke-width="0.6"/><rect x="7.6" y="0.5" width="6.6" height="6" fill="#dbeef9" stroke="#3da1d8" stroke-width="0.5"/><rect x="9.3" y="2.2" width="3" height="2.4" fill="#666"/></svg>

<!-- start menu -->
<style>.sm{position:absolute;white-space:nowrap;line-height:1;font-size:4.6px;letter-spacing:-0.12px;color:#fff}
.tl{position:absolute;white-space:nowrap;line-height:1.3;font-size:4.5px;letter-spacing:-0.1px;color:#fff}
.tile{position:absolute;width:36.4px;height:36.8px;background:#0679df}
</style>
<div class="a" style="left:107px;top:145.2px;width:235.7px;height:234px;background:#1a1a1a"></div>
<svg class="a" style="left:107px;top:145px" width="18" height="234" viewBox="107 145 18 234">
<rect x="112.8" y="153.3" width="6.3" height="4.6" fill="#707070"/><path d="M112.8,154.8 h6.3 M112.8,156.4 h6.3" stroke="#5a5a5a" stroke-width="0.4"/>
<circle cx="115.6" cy="300" r="3.1" fill="#6a6a6a"/><circle cx="115.6" cy="299" r="1.1" fill="#a8a8a8"/><path d="M113.6,301.9 a2,1.5 0 0 1 4,0" fill="#a8a8a8"/>
<path d="M113.9,314.6 h2.5 l1.6,1.6 v3.9 h-4.1z" fill="none" stroke="#eee" stroke-width="0.75"/>
<rect x="113.3" y="332.9" width="4.8" height="4.3" fill="none" stroke="#eee" stroke-width="0.75"/><path d="M113.8,336.8 l1.6,-1.6 l2.2,2" stroke="#eee" stroke-width="0.6" fill="none"/>
<circle cx="115.6" cy="352.2" r="2" fill="none" stroke="#eee" stroke-width="1.1" stroke-dasharray="1,0.55"/><circle cx="115.6" cy="352.2" r="0.8" fill="#eee"/>
<path d="M114,368.5 a2.3,2.3 0 1 0 3.2,0 M115.6,367.3 v2.4" stroke="#eee" stroke-width="0.75" fill="none"/>
</svg>
<div class="sm" style="left:130.5px;top:153.8px">#</div>
<svg class="a" style="left:130px;top:161.5px" width="12" height="12" viewBox="0 0 12 12"><rect width="12" height="12" fill="#0679df"/><circle cx="6" cy="6" r="4.8" fill="#f5d800"/><text x="2.4" y="7.6" font-size="4.2" font-weight="bold" fill="#d82020" font-family="Liberation Sans">1С</text></svg>
<div class="sm" style="left:145px;top:165.8px">1С Предприятие</div>
<svg class="a" style="left:130px;top:174.7px" width="12" height="12" viewBox="0 0 12 12"><rect width="12" height="12" fill="#0679df"/><rect x="3" y="2.5" width="6" height="7.5" fill="#f3d37d"/><rect x="3" y="2.5" width="6" height="1.2" fill="#e8bd50"/></svg>
<div class="sm" style="left:145px;top:179.0px">1С Предприятие 8</div>
<svg class="a" style="left:212.5px;top:179.2px" width="4" height="3" viewBox="0 0 4 3"><path d="M0.5,0.8 l1.5,1.5 l1.5,-1.5" stroke="#aaa" stroke-width="0.5" fill="none"/></svg>
<svg class="a" style="left:130px;top:187.9px" width="12" height="12" viewBox="0 0 12 12"><rect width="12" height="12" fill="#0679df"/><rect x="3" y="2.5" width="6" height="7.5" fill="#f3d37d"/><rect x="3" y="2.5" width="6" height="1.2" fill="#e8bd50"/></svg>
<div class="sm" style="left:145px;top:192.2px">1С Предприятие 8 (x86-64)</div>
<svg class="a" style="left:212.5px;top:192.4px" width="4" height="3" viewBox="0 0 4 3"><path d="M0.5,0.8 l1.5,1.5 l1.5,-1.5" stroke="#aaa" stroke-width="0.5" fill="none"/></svg>
<div class="sm" style="left:130.5px;top:206.6px">C</div>
<svg class="a" style="left:130px;top:214.3px" width="12" height="12" viewBox="0 0 12 12"><rect width="12" height="12" fill="#1a1a1a"/><rect x="4" y="4" width="4.5" height="4" fill="#e8e8e8"/><rect x="4.8" y="3" width="2.8" height="1.5" fill="#bbb"/></svg>
<div class="sm" style="left:145px;top:218.6px">Canon Office Printer Utility</div>
<svg class="a" style="left:130px;top:227.3px" width="12" height="12" viewBox="0 0 12 12"><rect width="12" height="12" fill="#0679df"/><rect x="3" y="2.5" width="6" height="7.5" fill="#f3d37d"/><rect x="3" y="2.5" width="6" height="1.2" fill="#e8bd50"/></svg>
<div class="sm" style="left:145px;top:231.6px">CAS</div>
<svg class="a" style="left:212.5px;top:231.8px" width="4" height="3" viewBox="0 0 4 3"><path d="M0.5,0.8 l1.5,1.5 l1.5,-1.5" stroke="#aaa" stroke-width="0.5" fill="none"/></svg>
<div class="sm" style="left:130.5px;top:245.8px">M</div>
<svg class="a" style="left:130px;top:254.1px" width="12" height="12" viewBox="0 0 12 12"><rect width="12" height="12" fill="#0f3c75"/><circle cx="6" cy="6" r="4.2" fill="#1a9ad6"/><path d="M3.5,6.5 a2.8,2.8 0 0 1 5.5,-1.2 a2,2 0 0 0 -3.2,1.5 a2.5,2.5 0 0 0 3.8,2" fill="#55d06a"/><circle cx="6.3" cy="6.6" r="1.5" fill="#0f3c75"/></svg>
<div class="sm" style="left:145px;top:258.4px">Microsoft Edge</div>
<div class="sm" style="left:130.5px;top:272.0px">P</div>
<svg class="a" style="left:130px;top:279.9px" width="12" height="12" viewBox="0 0 12 12"><rect width="12" height="12" fill="#0679df"/><rect x="3" y="2.5" width="6" height="7.5" fill="#f3d37d"/><rect x="3" y="2.5" width="6" height="1.2" fill="#e8bd50"/></svg>
<div class="sm" style="left:145px;top:284.2px">PeaZip</div>
<svg class="a" style="left:212.5px;top:284.4px" width="4" height="3" viewBox="0 0 4 3"><path d="M0.5,0.8 l1.5,1.5 l1.5,-1.5" stroke="#aaa" stroke-width="0.5" fill="none"/></svg>
<svg class="a" style="left:130px;top:293.3px" width="12" height="12" viewBox="0 0 12 12"><rect width="12" height="12" fill="#0679df"/><rect x="3" y="2.5" width="6" height="7.5" fill="#f3d37d"/><rect x="3" y="2.5" width="6" height="1.2" fill="#e8bd50"/></svg>
<div class="sm" style="left:145px;top:297.6px">PowerShell</div>
<svg class="a" style="left:212.5px;top:297.8px" width="4" height="3" viewBox="0 0 4 3"><path d="M0.5,0.8 l1.5,1.5 l1.5,-1.5" stroke="#aaa" stroke-width="0.5" fill="none"/></svg>
<svg class="a" style="left:130px;top:305.9px" width="12" height="12" viewBox="0 0 12 12"><rect width="12" height="12" fill="#0679df"/><rect x="3" y="2.5" width="6" height="7.5" fill="#f3d37d"/><rect x="3" y="2.5" width="6" height="1.2" fill="#e8bd50"/></svg>
<div class="sm" style="left:145px;top:310.2px">PuTTY (64-bit)</div>
<svg class="a" style="left:212.5px;top:310.4px" width="4" height="3" viewBox="0 0 4 3"><path d="M0.5,0.8 l1.5,1.5 l1.5,-1.5" stroke="#aaa" stroke-width="0.5" fill="none"/></svg>
<div class="sm" style="left:130.5px;top:324.8px">T</div>
<svg class="a" style="left:130px;top:332.5px" width="12" height="12" viewBox="0 0 12 12"><rect width="12" height="12" fill="#0679df"/><circle cx="6" cy="6" r="4.5" fill="#fff"/><path d="M2.6,6 L4.2,4.5 V5.4 H7.8 V4.5 L9.4,6 L7.8,7.5 V6.6 H4.2 V7.5z" fill="#0679df"/></svg>
<div class="sm" style="left:145px;top:336.8px">TeamViewer 12</div>
<svg class="a" style="left:130px;top:345.7px" width="12" height="12" viewBox="0 0 12 12"><rect width="12" height="12" fill="#0679df"/><rect x="3" y="2.5" width="6" height="7.5" fill="#f3d37d"/><rect x="3" y="2.5" width="6" height="1.2" fill="#e8bd50"/></svg>
<div class="sm" style="left:145px;top:350.0px">The Dude</div>
<svg class="a" style="left:212.5px;top:350.2px" width="4" height="3" viewBox="0 0 4 3"><path d="M0.5,0.8 l1.5,1.5 l1.5,-1.5" stroke="#aaa" stroke-width="0.5" fill="none"/></svg>
<div class="sm" style="left:130.5px;top:364.1px">W</div>
<div class="a" style="left:130px;top:372.1px;width:92px;height:6.9px;overflow:hidden"><svg class="a" style="left:0;top:0" width="12" height="12" viewBox="0 0 12 12"><rect width="12" height="12" fill="#0679df"/><rect x="3" y="2.5" width="6" height="7.5" fill="#f3d37d"/><rect x="3" y="2.5" width="6" height="1.2" fill="#e8bd50"/></svg><div class="sm" style="left:15px;top:4.3px">Windows PowerShell</div><svg class="a" style="left:82.5px;top:4.5px" width="4" height="3" viewBox="0 0 4 3"><path d="M0.5,0.8 l1.5,1.5 l1.5,-1.5" stroke="#aaa" stroke-width="0.5" fill="none"/></svg></div>
<div class="tile" style="left:224.9px;top:162.6px;background:#0679df"></div>
<svg class="a" style="left:224.9px;top:162.6px" width="36.6" height="36.4" viewBox="0 0 36.6 36.4"><rect x="12" y="12" width="9.5" height="8.5" fill="#f2f2f2" stroke="#c8c8c8" stroke-width="0.4"/><path d="M13.5,13 v4 M15,13.5 h5" stroke="#999" stroke-width="0.6"/><path d="M14,18.5 q4,-1.5 9,0.5 l-0.5,4 q-4,1.5 -8.5,0z" fill="#e41e2b"/><path d="M15.5,20 h5" stroke="#ff7a85" stroke-width="0.5"/></svg>
<div class="tl" style="left:227.9px;top:186.7px">Администрир...<br>серверов 1С...</div>
<div class="tile" style="left:262.9px;top:162.6px;background:#0679df"></div>
<svg class="a" style="left:262.9px;top:162.6px" width="36.6" height="36.4" viewBox="0 0 36.6 36.4"><circle cx="18.3" cy="17.5" r="5.8" fill="#f7d700"/><text x="13.3" y="19.6" font-size="5.2" font-weight="bold" fill="#e02020" font-family="Liberation Sans">1С</text></svg>
<div class="tl" style="left:265.9px;top:186.7px">1С<br>Предприятие</div>
<div class="tile" style="left:300.7px;top:162.6px;background:#0b3f8a"></div>
<svg class="a" style="left:300.7px;top:162.6px" width="36.6" height="36.4" viewBox="0 0 36.6 36.4"><circle cx="18" cy="18" r="5.9" fill="#1798d8"/><path d="M12.5,18.8 a5.6,5.6 0 0 1 11.2,-1.6 a3.4,3.4 0 0 0 -5.5,1.4 a4,4 0 0 0 4.5,4" fill="#5bd372"/><circle cx="18.6" cy="19.3" r="2.3" fill="#0b3f8a"/></svg>
<div class="tl" style="left:303.7px;top:192.3px">Microsoft Edge</div>
<div class="tile" style="left:224.9px;top:201.1px;background:#0679df"></div>
<svg class="a" style="left:224.9px;top:201.1px" width="36.6" height="36.4" viewBox="0 0 36.6 36.4"><circle cx="18" cy="17" r="4.8" fill="#d81020" stroke="#333" stroke-width="0.5"/><circle cx="17" cy="16" r="2" fill="#f08080"/><path d="M14,13 l-1,-1 M22,13 l1,-1 M14,21 l-1,1 M22,21 l1,1" stroke="#555" stroke-width="0.6"/></svg>
<div class="tl" style="left:227.9px;top:230.3px">The Dude</div>
<div class="tile" style="left:262.9px;top:201.1px;background:#0679df"></div>
<svg class="a" style="left:262.9px;top:201.1px" width="36.6" height="36.4" viewBox="0 0 36.6 36.4"><rect x="13" y="13.5" width="10.5" height="8" fill="#8fd3f5"/><rect x="14" y="14.5" width="3" height="3" fill="#f5c040"/><rect x="14" y="18" width="3" height="2.5" fill="#3070c0"/><path d="M18.5,15.5 h4 M18.5,17.5 h4 M18.5,19.5 h4" stroke="#fff" stroke-width="0.6"/></svg>
<div class="tl" style="left:265.9px;top:224.7px">Панель<br>управления</div>
<div class="tile" style="left:300.7px;top:201.1px;background:#0679df"></div>
<svg class="a" style="left:300.7px;top:201.1px" width="36.6" height="36.4" viewBox="0 0 36.6 36.4"><path d="M13,13 h4 l1,1 h5.5 v9 h-10.5z" fill="#e8b84a"/><rect x="13" y="15" width="10.5" height="8" fill="#f8da72"/><rect x="15.5" y="19" width="5.5" height="4" fill="#1a88d8"/></svg>
<div class="tl" style="left:303.7px;top:230.3px">Проводник</div>
<div class="tile" style="left:224.9px;top:251.7px;background:#0679df"></div>
<svg class="a" style="left:224.9px;top:251.7px" width="36.6" height="36.4" viewBox="0 0 36.6 36.4"><rect x="13" y="12" width="2.5" height="2.5" fill="#3a7ad8"/><path d="M15.5,17 v-2 a2.5,2.5 0 0 1 5,0 v2" stroke="#888" stroke-width="1.1" fill="none"/><rect x="14" y="17" width="7.5" height="6" fill="#6e6e6e"/><rect x="14" y="17" width="7.5" height="2.5" fill="#a8a8a8"/><circle cx="22.3" cy="23" r="2" fill="#21b544"/></svg>
<div class="tl" style="left:227.9px;top:281.4px">WinSCP</div>
<div class="tile" style="left:262.9px;top:251.7px;background:#0679df"></div>
<svg class="a" style="left:262.9px;top:251.7px" width="36.6" height="36.4" viewBox="0 0 36.6 36.4"><rect x="16.5" y="12" width="6" height="4.5" fill="#e8e8e8" stroke="#333" stroke-width="0.5"/><rect x="17.2" y="12.7" width="4.6" height="3" fill="#2f4ea8"/><rect x="12.5" y="17.5" width="6" height="4.5" fill="#e8e8e8" stroke="#333" stroke-width="0.5"/><rect x="13.2" y="18.2" width="4.6" height="3" fill="#2f4ea8"/><path d="M16,18 L20,16" stroke="#f5d000" stroke-width="1.2"/><rect x="12" y="22.3" width="7" height="1" fill="#bbb"/><rect x="16" y="16.8" width="7" height="1" fill="#bbb"/></svg>
<div class="tl" style="left:265.9px;top:281.4px">PuTTY</div>
<div class="tile" style="left:300.7px;top:251.7px;background:#0679df"></div>
<svg class="a" style="left:300.7px;top:251.7px" width="36.6" height="36.4" viewBox="0 0 36.6 36.4"><path d="M14.5,13 h11 l-2.5,8.6 h-11z" fill="#e0208f"/><path d="M15.6,14 h8.6 l-1.9,6.6 h-8.6z" fill="#24308a"/><path d="M16,15 l2.5,1.8 l-3,2 M19,19.6 h2.5" stroke="#fff" stroke-width="0.8" fill="none"/></svg>
<div class="tl" style="left:303.7px;top:275.8px">PowerShell 7-<br>preview (x64)</div>
<div class="tile" style="left:224.9px;top:290.0px;background:#0679df"></div>
<svg class="a" style="left:224.9px;top:290.0px" width="36.6" height="36.4" viewBox="0 0 36.6 36.4"><circle cx="18" cy="17.4" r="5.2" fill="#f0f0f0"/><g stroke="#f0f0f0" stroke-width="1.6"><path d="M18,11.5 v11.8 M12.1,17.4 h11.8 M13.8,13.2 l8.4,8.4 M22.2,13.2 l-8.4,8.4"/></g><circle cx="18" cy="17.4" r="3.5" fill="#1fa640"/><path d="M16,17.5 a2,2 0 0 1 3.8,-0.8" stroke="#fff" stroke-width="0.7" fill="none"/></svg>
<div class="tl" style="left:227.9px;top:319.4px">Обновлятор-...</div>
<div class="tile" style="left:262.9px;top:290.0px;background:#0679df"></div>
<svg class="a" style="left:262.9px;top:290.0px" width="36.6" height="36.4" viewBox="0 0 36.6 36.4"><rect x="13" y="13" width="11" height="8.5" fill="#111" stroke="#bbb" stroke-width="0.4"/><rect x="13" y="13" width="11" height="1.2" fill="#ddd"/><path d="M14.3,15.5 l1,0.7 l-1,0.7 M15.7,17 h1.2" stroke="#ddd" stroke-width="0.4" fill="none"/></svg>
<div class="tl" style="left:265.9px;top:313.8px">Командная<br>строка</div>
<!-- win taskbar -->
<div class="a" style="left:107px;top:379px;width:586px;height:14.5px;background:#050505"></div>
<div class="a" style="left:107.3px;top:379px;width:16.7px;height:14.5px;background:#2c2c2c"></div>
<svg class="a" style="left:107px;top:379px" width="90" height="15" viewBox="107 379 90 15">
<path d="M112.6,383.3 l2.6,-0.4 v2.9 h-2.6z M115.6,382.8 l3.6,-0.5 v3.5 h-3.6z M112.6,386.2 h2.6 v2.9 l-2.6,-0.4z M115.6,386.2 h3.6 v3.5 l-3.6,-0.5z" fill="#fff"/>
<circle cx="134.2" cy="385.2" r="1.9" fill="none" stroke="#eee" stroke-width="0.6"/><path d="M132.9,386.6 L131,388.6" stroke="#eee" stroke-width="0.7"/>
<rect x="148.2" y="383.6" width="4.8" height="3.8" fill="none" stroke="#eee" stroke-width="0.6"/><path d="M147,383 v5 M154.2,383 v5" stroke="#eee" stroke-width="0.5"/>
<path d="M165.6,382.5 h2.5 l0.8,0.8 h4.2 v5.8 h-7.5z" fill="#e6b640"/><rect x="165.6" y="384" width="7.5" height="5.1" fill="#f8d771"/><rect x="167.5" y="387" width="3.8" height="2.2" fill="#1f8ad8"/>
<rect x="162.5" y="392.3" width="14.3" height="0.9" fill="#76b9ed"/>
</svg>
<svg class="a" style="left:595px;top:379px" width="98" height="15" viewBox="595 379 98 15">
<path d="M600.5,388.5 a1.6,1.6 0 1 1 2,0 M599.5,390 q1.5,-1.5 4,0 M603,384 a1.2,1.2 0 1 1 1.5,1.2" stroke="#ddd" stroke-width="0.5" fill="none"/>
<path d="M612.8,387.4 l1.7,-1.7 l1.7,1.7" stroke="#ddd" stroke-width="0.55" fill="none"/>
<rect x="621.2" y="384.2" width="4.6" height="3.4" fill="none" stroke="#ddd" stroke-width="0.5"/><path d="M622.5,388.6 h2" stroke="#ddd" stroke-width="0.5"/>
<path d="M631,386.5 a1.3,1.3 0 0 0 0,-2.4" stroke="#ddd" stroke-width="0.5" fill="none"/><circle cx="633.6" cy="388" r="1.1" fill="#e81123"/>
</svg>
<div class="t" style="left:638.4px;top:384.4px;font-size:4.3px;letter-spacing:-0.1px;color:#fff;text-shadow:0 0 0.4px #fff">ENG</div>
<div class="t" style="left:656.8px;top:381px;font-size:4.2px;color:#fff;text-shadow:0 0 0.4px #fff">15:32</div>
<div class="t" style="left:651.5px;top:387.3px;font-size:4.2px;letter-spacing:-0.05px;color:#fff;text-shadow:0 0 0.4px #fff">28.05.2022</div>
<svg class="a" style="left:677px;top:382px" width="8" height="8" viewBox="0 0 8 8"><path d="M1.5,1.5 h5 v4 h-2.5 l-1,1 v-1 h-1.5z" fill="none" stroke="#ddd" stroke-width="0.55"/></svg>

<!-- linux taskbar -->
<style>.tb{position:absolute;white-space:nowrap;line-height:1;font-size:4.75px;color:#3a3a3a}</style>
<div class="a" style="left:0;top:426.8px;width:700px;height:11.2px;background:linear-gradient(#dadada,#d3d3d3);border-top:0.5px solid #cacaca"></div>
<svg class="a" style="left:1px;top:428px" width="9" height="9" viewBox="0 0 9 9"><path d="M1,1.5 h6 l-1.5,4 h-4.5z" fill="#f0c400"/><path d="M2,2.5 l1.5,2 l1,-2 M4,6 l2,-1 l2,3 h-5z" fill="#111"/></svg>
<div class="tb" style="left:12px;top:430.3px;color:#333">Меню</div>
<svg class="a" style="left:26.5px;top:428.8px" width="8" height="8" viewBox="0 0 8 8"><path d="M0.3,0.8 h2.8 l0.8,0.8 h3.8 v6 h-7.4z" fill="#a5845c"/><rect x="0.3" y="2.3" width="7.4" height="5.3" fill="#cfa878"/></svg>
<div class="a" style="left:34.5px;top:426.5px;width:9.5px;height:11.5px;background:linear-gradient(#7fb0da,#4f88bf)"></div>
<div class="a" style="left:36.6px;top:429.7px;width:5px;height:5px;border-radius:50%;background:radial-gradient(circle at 40% 40%,#d4f5ea,#73c7b7 70%,#7fc5e0)"></div>
<div class="a" style="left:37px;top:436.8px;width:5px;height:1.2px;background:#1a1a1a"></div>
<div class="a" style="left:44px;top:426.5px;width:9px;height:11.5px;background:#a8a8a8"></div>
<svg class="a" style="left:54.5px;top:428px" width="2" height="9" viewBox="0 0 2 9"><circle cx="1" cy="1.8" r="0.5" fill="#999"/><circle cx="1" cy="4.4" r="0.5" fill="#999"/><circle cx="1" cy="7" r="0.5" fill="#999"/></svg>
<svg class="a" style="left:58.5px;top:429px" width="6" height="7" viewBox="0 0 6 7"><rect x="0.3" y="0.5" width="5.4" height="4.5" fill="#c8d8e8" stroke="#6a8aaa" stroke-width="0.4"/><rect x="1" y="2" width="4" height="2.5" fill="#5a8ac0"/><rect x="1" y="5.5" width="4" height="1" fill="#999"/></svg>
<div class="tb" style="left:67px;top:430.3px">[Сеть Windows]</div>
<svg class="a" style="left:128.4px;top:429.8px" width="5.2" height="5" viewBox="0 0 5.2 5"><rect width="5.2" height="5" fill="#4a7a4a"/><rect x="0.7" y="0.7" width="3.8" height="3.6" fill="#6cb86c"/></svg>
<div class="tb" style="left:136.7px;top:430.3px">[Системный монитор]</div>
<svg class="a" style="left:197px;top:429.2px" width="6.5" height="6.5" viewBox="0 0 6.5 6.5"><circle cx="3.25" cy="3.25" r="3" fill="#f08020"/><circle cx="3.4" cy="3.4" r="1.7" fill="#8a3ac0"/><path d="M0.8,2 q1,-2 3,-1.5" stroke="#ffd040" stroke-width="0.8" fill="none"/></svg>
<div class="tb" style="left:206px;top:430.3px">[Релизы — Mozilla Firefox]</div>
<div class="a" style="left:267.7px;top:429.7px;width:5.2px;height:5.2px;border-radius:50%;background:radial-gradient(circle at 40% 40%,#d4f5ea,#73c7b7 70%,#7fc5e0)"></div>
<div class="tb" style="left:275.7px;top:430.3px">Клиент удалённого рабо...</div>
<div class="a" style="left:335.5px;top:427px;width:69.4px;height:11px;background:linear-gradient(#c9c9c9,#b9b9b9)"></div>
<div class="a" style="left:337.8px;top:429.7px;width:5.2px;height:5.2px;border-radius:50%;background:radial-gradient(circle at 40% 40%,#d4f5ea,#73c7b7 70%,#7fc5e0)"></div>
<div class="tb" style="left:345.5px;top:430.3px">192.168.99.141</div>
<!-- tray -->
<svg class="a" style="left:582px;top:427px" width="80" height="11" viewBox="582 427 80 11">
<circle cx="584" cy="430" r="0.4" fill="#999"/><circle cx="584" cy="432.3" r="0.4" fill="#999"/><circle cx="584" cy="434.6" r="0.4" fill="#999"/>
<path d="M587,432 v-1.5 a2,2 0 0 1 4,0 v1.5" stroke="#666" stroke-width="0.6" fill="none"/><rect x="586.3" y="432" width="5.4" height="4" fill="none" stroke="#666" stroke-width="0.6"/>
<path d="M607,436 L617,429.5 V436z" fill="#e0b000"/><path d="M608.5,430 h7 v3.5 h-7z" fill="#333" opacity="0.8"/><path d="M608,436.5 h9" stroke="#666" stroke-width="0.5"/>
<path d="M621,431 h1.5 l2,-1.5 v6 l-2,-1.5 h-1.5z" fill="#888"/><path d="M625.5,431 q1,1.5 0,3" stroke="#aaa" stroke-width="0.5" fill="none"/>
<rect x="632.5" y="429.5" width="6.5" height="7" fill="#f0d8a8" stroke="#8a7050" stroke-width="0.4"/><rect x="634" y="428.8" width="3.5" height="1.5" fill="#8a7050"/><rect x="633.5" y="431" width="3" height="3.5" fill="#e44"/>
<circle cx="645.5" cy="432.3" r="4.2" fill="#fff" stroke="#17a44a" stroke-width="1"/><path d="M643.5,430.5 l2,1.8 l-2,1.8 M647.6,430.5 l-1.5,3.5" stroke="#1a5fc0" stroke-width="0.8" fill="none"/>
<rect x="653.3" y="429.2" width="7.5" height="5" fill="#3a6fb8"/><rect x="654" y="429.9" width="6" height="3.5" fill="#7fb0e8"/><rect x="653" y="434.5" width="8" height="1.5" fill="#555"/>
</svg>
<div class="tb" style="left:597.8px;top:430.3px;font-size:4.5px">en</div>
<div class="tb" style="left:663px;top:430.3px;font-size:4.5px">Сб, 28 мая, 15:32</div>
</body></html>
